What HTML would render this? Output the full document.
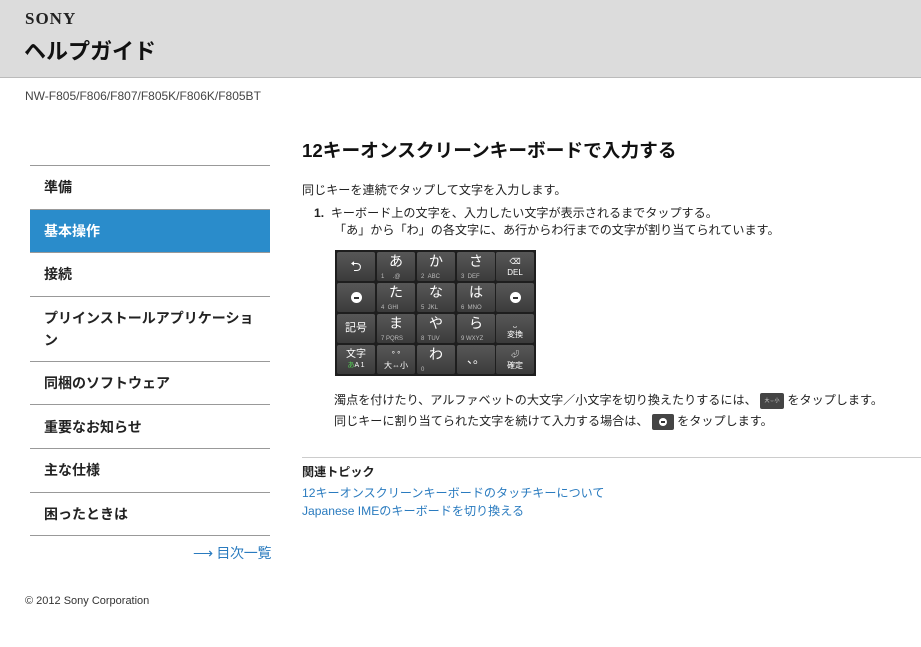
<!DOCTYPE html>
<html><head><meta charset="utf-8"><style>
*{margin:0;padding:0;box-sizing:border-box}
body{width:921px;height:647px;background:#fff;font-family:"Liberation Sans","Noto Sans CJK JP",sans-serif;color:#222;position:relative;overflow:hidden}
.hdr{position:absolute;left:0;top:0;width:921px;height:78px;background:#dcdcdc;border-bottom:1px solid #bbb}
.sony{position:absolute;left:25px;top:9px;font-family:"Liberation Serif",serif;font-weight:bold;font-size:17px;letter-spacing:1px;color:#222}
.hg{position:absolute;left:24px;top:34px;font-size:22px;font-weight:bold;color:#111}
.model{position:absolute;left:25px;top:89px;font-size:12px;color:#444}
.nav{position:absolute;left:30px;top:165px;width:240px;border-top:1px solid #999}
.nav div{border-bottom:1px solid #999;font-size:14px;font-weight:bold;padding:0 14px;height:43.6px;display:flex;align-items:center;line-height:22px}
.nav div.act{background:#2a8ccb;color:#fff}
.nav div.two{height:65px}
.idx{position:absolute;left:193px;top:543px;font-size:14px;color:#2a7bbf;letter-spacing:-0.3px}
.copy{position:absolute;left:25px;top:595px;font-size:11px;color:#333}
h1{position:absolute;left:302px;top:136px;font-size:18.7px;font-weight:bold;color:#111;white-space:nowrap}
.t{position:absolute;font-size:12.1px;color:#222;white-space:nowrap}
.kb{position:absolute;left:335px;top:250px;width:201px;height:126px;background:#1e1e1e}
.k{position:absolute;width:38px;height:29px;background:linear-gradient(#575757,#3b3b3b);border-radius:2px;color:#fff;text-align:center;font-size:11px}
.k b{display:block;font-size:14px;font-weight:normal;line-height:18px}
.k i{font-style:normal;font-size:6px;color:#bbb;position:absolute;bottom:1px;left:4px;right:4px;text-align:left}
.c{display:flex;align-items:center;justify-content:center;flex-direction:column;line-height:11px}
.dot{width:11px;height:11px;border-radius:50%;background:#fff;position:relative}
.dot:after{content:"";position:absolute;left:3px;top:4.5px;width:5px;height:2px;background:#333}
.rel{position:absolute;left:302px;top:457px;width:619px;border-top:1px solid #ccc}
.a{position:absolute;font-size:12.1px;color:#2a7bbf;white-space:nowrap}
.mini{display:inline-flex;align-items:center;justify-content:center;vertical-align:middle;background:#444;border-radius:2px;color:#ddd;font-size:5px}
.mini .dot{width:8px;height:8px}
.mini .dot:after{left:2px;top:3px;width:4px;height:2px}
</style></head><body>
<div class="hdr"><div class="sony">SONY</div><div class="hg">ヘルプガイド</div></div>
<div class="model">NW-F805/F806/F807/F805K/F806K/F805BT</div>
<div class="nav">
<div>準備</div><div class="act">基本操作</div><div>接続</div><div class="two">プリインストールアプリケーション</div><div>同梱のソフトウェア</div><div>重要なお知らせ</div><div>主な仕様</div><div>困ったときは</div>
</div>
<div class="idx">⟶ 目次一覧</div>
<div class="copy">© 2012 Sony Corporation</div>
<h1>12キーオンスクリーンキーボードで入力する</h1>
<div class="t" style="left:302px;top:181px">同じキーを連続でタップして文字を入力します。</div>
<div class="t" style="left:314px;top:204px"><b>1.</b>&nbsp; キーボード上の文字を、入力したい文字が表示されるまでタップする。</div>
<div class="t" style="left:334px;top:221px">「あ」から「わ」の各文字に、あ行からわ行までの文字が割り当てられています。</div>
<div class="kb">
<div class="k c" style="left:2px;top:2px;font-size:14px">⮌</div>
<div class="k" style="left:42px;top:2px"><b>あ</b><i>1 &nbsp;&nbsp;&nbsp;&nbsp;.@</i></div>
<div class="k" style="left:82px;top:2px"><b>か</b><i>2 &nbsp;ABC</i></div>
<div class="k" style="left:122px;top:2px"><b>さ</b><i>3 &nbsp;DEF</i></div>
<div class="k c" style="left:161px;top:2px;font-size:8px">⌫<br>DEL</div>
<div class="k c" style="left:2px;top:33px"><span class="dot"></span></div>
<div class="k" style="left:42px;top:33px"><b>た</b><i>4 &nbsp;GHI</i></div>
<div class="k" style="left:82px;top:33px"><b>な</b><i>5 &nbsp;JKL</i></div>
<div class="k" style="left:122px;top:33px"><b>は</b><i>6 &nbsp;MNO</i></div>
<div class="k c" style="left:161px;top:33px"><span class="dot"></span></div>
<div class="k c" style="left:2px;top:64px;font-size:11px">記号</div>
<div class="k" style="left:42px;top:64px"><b>ま</b><i>7 PQRS</i></div>
<div class="k" style="left:82px;top:64px"><b>や</b><i>8 &nbsp;TUV</i></div>
<div class="k" style="left:122px;top:64px"><b>ら</b><i>9 WXYZ</i></div>
<div class="k c" style="left:161px;top:64px;font-size:8px">⎵<br>変換</div>
<div class="k c" style="left:2px;top:95px;font-size:10px">文字<br><span style="font-size:7px"><span style="color:#5c5">あ</span>A 1</span></div>
<div class="k c" style="left:42px;top:95px;font-size:8px">° °<br>大⇔小</div>
<div class="k" style="left:82px;top:95px"><b>わ</b><i>0</i></div>
<div class="k c" style="left:122px;top:95px;font-size:12px">、。</div>
<div class="k c" style="left:161px;top:95px;font-size:8px">⏎<br>確定</div>
</div>
<div class="t" style="left:334px;top:391px">濁点を付けたり、アルファベットの大文字／小文字を切り換えたりするには、 <span class="mini" style="width:24px;height:16px">大⇔小</span> をタップします。</div>
<div class="t" style="left:334px;top:412px">同じキーに割り当てられた文字を続けて入力する場合は、 <span class="mini" style="width:22px;height:16px"><span class="dot"></span></span> をタップします。</div>
<div class="rel"></div>
<div class="t" style="left:302px;top:463px;font-weight:bold">関連トピック</div>
<div class="a" style="left:302px;top:484px">12キーオンスクリーンキーボードのタッチキーについて</div>
<div class="a" style="left:302px;top:502px">Japanese IMEのキーボードを切り換える</div>
</body></html>
